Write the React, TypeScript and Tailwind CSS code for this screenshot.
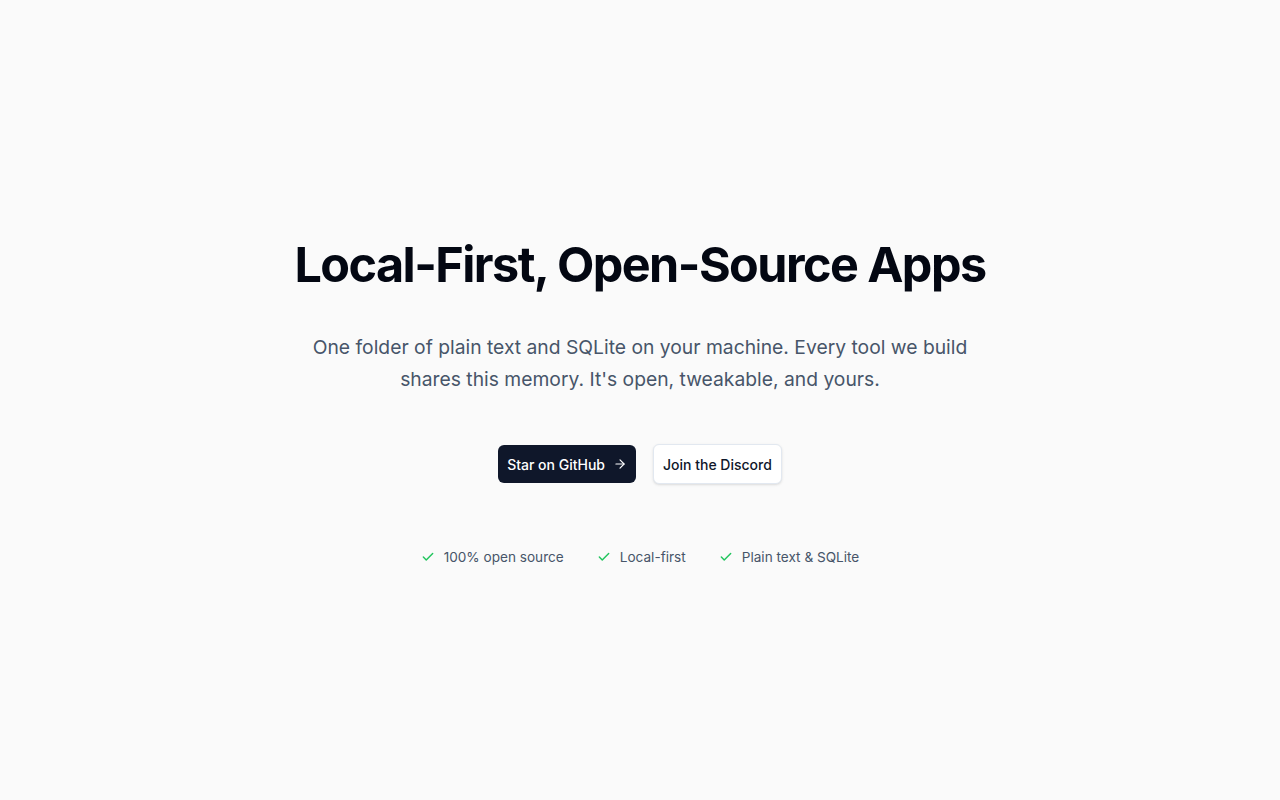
import React from "react";

function Check() {
  return (
    <svg width="14" height="14" viewBox="0 0 24 24" fill="none" stroke="#22c55e" strokeWidth="2.5" strokeLinecap="round" strokeLinejoin="round">
      <path d="M20 6 9 17l-5-5" />
    </svg>
  );
}

export default function App() {
  return (
    <div className="min-h-screen bg-[#fafafa] flex items-center justify-center pt-[5px]" style={{ fontFamily: "Inter, 'Liberation Sans', sans-serif" }}>
      <div className="flex flex-col items-center text-center">
        <h1 className="text-[48.5px] leading-[56px] font-bold tracking-[-0.032em] text-[#030712]">
          Local-First, Open-Source Apps
        </h1>
        <p className="mt-[38px] max-w-[680px] text-[19.3px] leading-[32px] text-[#475569]">
          One folder of plain text and SQLite on your machine. Every tool we build shares this memory. It's open, tweakable, and yours.
        </p>
        <div className="mt-[49px] flex items-center gap-[17px]">
          <button className="h-[38px] px-[9px] rounded-md bg-[#0f172a] text-white text-[14px] font-medium flex items-center gap-[8px]">
            Star on GitHub
            <svg width="14" height="14" viewBox="0 0 24 24" fill="none" stroke="currentColor" strokeWidth="2" strokeLinecap="round" strokeLinejoin="round">
              <path d="M5 12h14" />
              <path d="m12 5 7 7-7 7" />
            </svg>
          </button>
          <button className="h-[40px] px-[9px] rounded-md bg-white border border-[#e2e8f0] text-[#0f172a] text-[14px] font-medium shadow-sm">
            Join the Discord
          </button>
        </div>
        <div className="mt-[63px] flex items-center gap-[33px] text-[13.6px] text-[#475569]">
          <div className="flex items-center gap-[9px]"><Check />100% open source</div>
          <div className="flex items-center gap-[9px]"><Check />Local-first</div>
          <div className="flex items-center gap-[9px]"><Check />Plain text &amp; SQLite</div>
        </div>
      </div>
    </div>
  );
}
